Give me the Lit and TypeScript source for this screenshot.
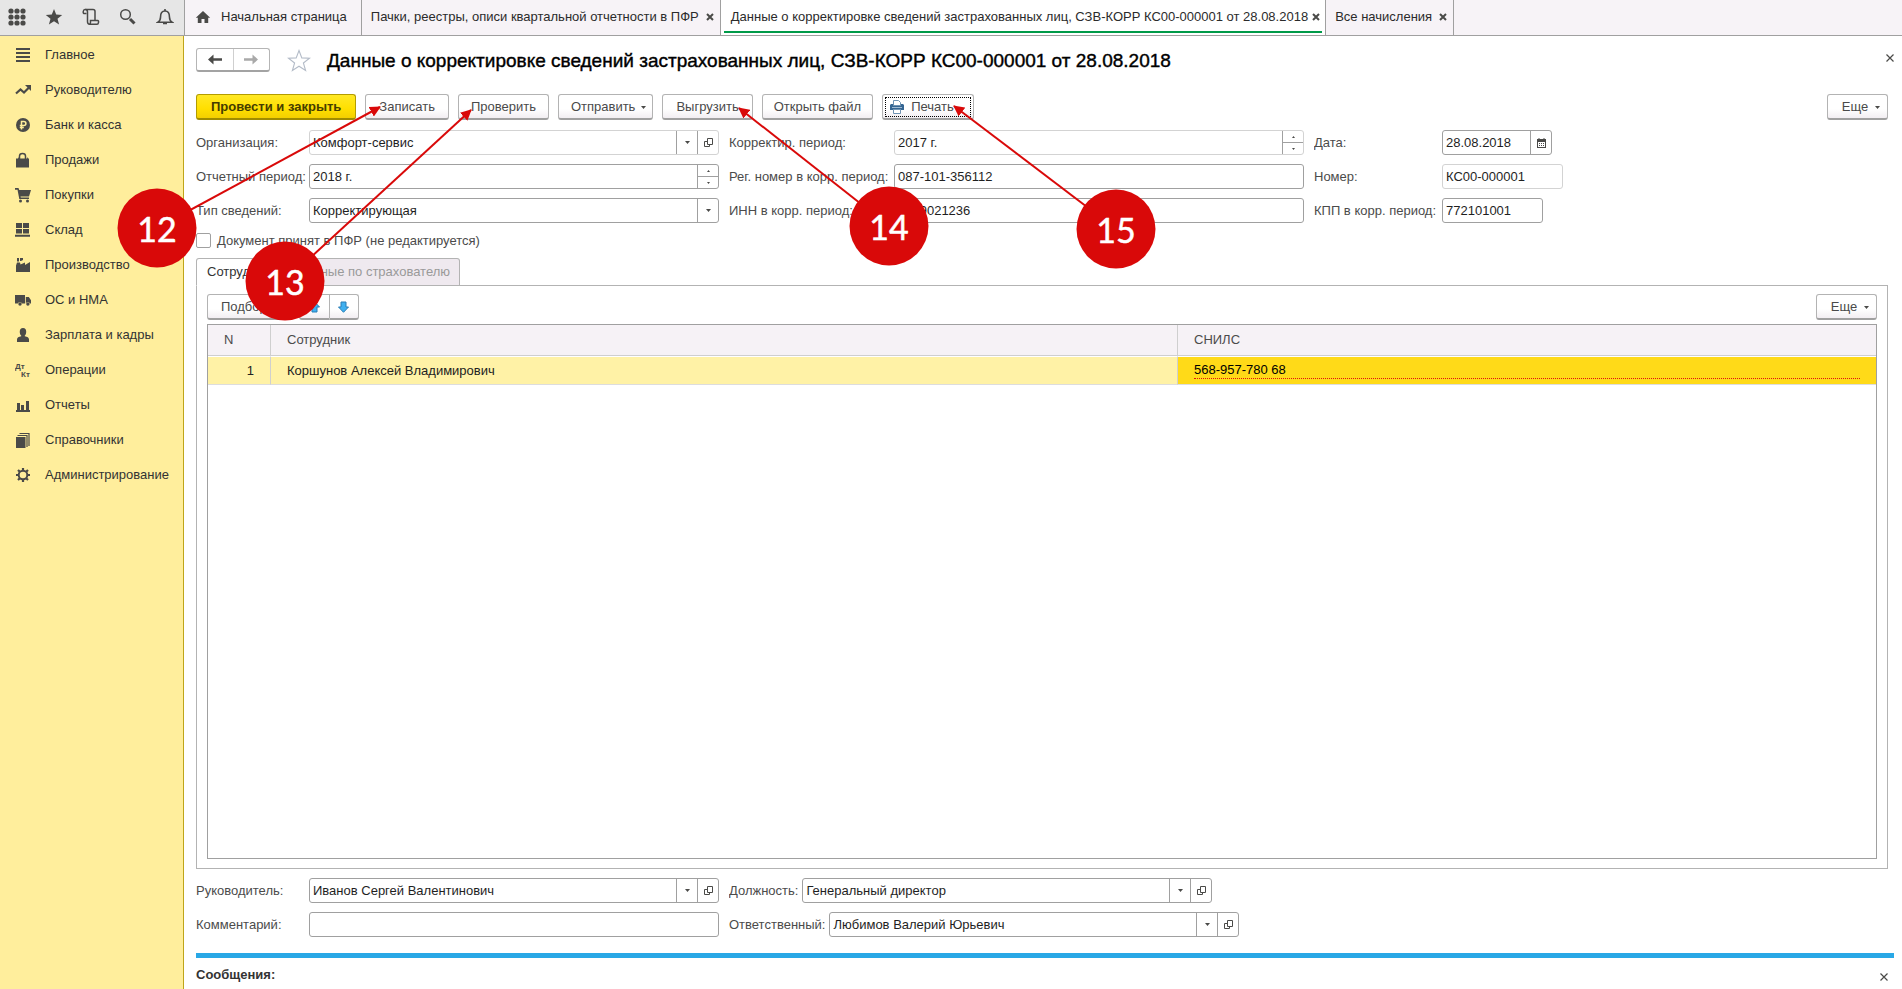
import { LitElement, html, css, svg, TemplateResult } from "lit";
import { customElement, property } from "lit/decorators.js";
import { classMap } from "lit/directives/class-map.js";

const ink = "#4a4a48";

const icons: Record<string, TemplateResult> = {
  apps: svg`<g fill=${ink}>${[3, 9, 15].map((y) => [3, 9, 15].map((x) => svg`<circle cx=${x} cy=${y} r="2.6"/>`))}</g>`,
  star: svg`<path fill=${ink} d="M9 1l2.200 5.600 6 .3-4.700 3.800 1.600 5.900L9 13.300l-5.100 3.300 1.600-5.900L.8 6.900l6-.3z"/>`,
  history: svg`<g fill="none" stroke=${ink} stroke-width="1.500"><path d="M4.500 5.500H1.800c-.9 0-1-4 1.200-4h8c1.500 0 2 .8 2 2v9"/><path d="M3.500 1.500c1.500 0 2 1 2 2.500v9.500c0 1.800.8 2.700 2 2.700h7.500c1.800 0 2-3.700.8-3.700H8.500v1.800c0 1.200-.4 1.900-1.200 1.900"/></g>`,
  search: svg`<circle cx="6.500" cy="6.500" r="4.800" fill="none" stroke=${ink} stroke-width="1.500"/><path d="M11 11l4.500 4.500" stroke=${ink} stroke-width="3"/>`,
  bell: svg`<g fill="none" stroke=${ink} stroke-width="1.600"><path d="M2 14.200c1.800-1.200 2.500-2.500 2.500-5 0-4 1.500-6.200 4.500-6.200s4.500 2.200 4.500 6.200c0 2.500.7 3.800 2.500 5z"/><path d="M9 1v2M7 15.500h4"/></g>`,
  home: svg`<path fill=${ink} d="M8 2l7.200 6.800h-2V14H9.500v-4h-3v4H2.800V8.800h-2z"/>`,
  main: svg`<path fill=${ink} d="M1 1h14v2H1zM1 5h14v2H1zM1 9h14v2H1zM1 13h14v2H1z"/>`,
  chief: svg`<path fill="none" stroke=${ink} stroke-width="2.200" d="M1 11.500l4.500-4 3.500 3 5-5"/><path fill=${ink} d="M10 3h6v6z"/>`,
  bank: svg`<circle cx="8" cy="8" r="7" fill=${ink}/><path fill="none" stroke="#ffee9c" stroke-width="1.500" d="M6.500 12.500V4.500h2.300c2.800 0 2.800 4 0 4H4.800M4.800 10.500h4"/>`,
  sales: svg`<path fill=${ink} d="M1 6.500h2V5l1 1.500h8L13 5v1.500h1v9H1z"/><path fill="none" stroke=${ink} stroke-width="1.500" d="M4.500 8V4c0-3.500 6-3.500 6 0v4"/>`,
  cart: svg`<path fill=${ink} d="M0 1h3.500l.7 2H16l-2 6.500H5.500l.3 1H14V12H4.300L2.500 2.800H0z"/><circle cx="5.500" cy="14" r="1.500" fill=${ink}/><circle cx="12.500" cy="14" r="1.500" fill=${ink}/>`,
  store: svg`<path fill=${ink} d="M1 1h6v5H1zM8 1h6v5H8zM1 7h6v4.500H1zM8 7h6v4.500H8zM0 12.800h15v2H0z"/>`,
  factory: svg`<path fill=${ink} d="M1 15V8.500L2 5.500h3l.5 2L10 5.500V8l5-3v10zM2 1h2v3.500H2zM5 1h3v2L6 4H5z"/>`,
  truck: svg`<path fill=${ink} d="M0 3h10v8.500H7a2.200 2.200 0 00-4.200 0H0zM10.800 5h3L16 8.200v3.300h-1a2.200 2.200 0 00-4.200 0z"/><circle cx="5" cy="12" r="1.700" fill=${ink}/><circle cx="12.900" cy="12" r="1.700" fill=${ink}/>`,
  person: svg`<path fill=${ink} d="M8 1c4.500 0 3.500 6.500 1.800 7.500v.8c2.500.7 4.200 1.200 4.200 3.200V15H2v-2.500c0-2 1.700-2.500 4.200-3.200v-.8C4.500 7.500 3.500 1 8 1z"/>`,
  dtkt: svg`<g fill=${ink} font-family="Liberation Sans" font-weight="700" font-size="8"><text x="0" y="7">Дт</text><text x="6" y="15">Кт</text></g>`,
  chart: svg`<path fill=${ink} d="M1 13h14v2H1zM2 6h3v8H2zM6 8h3v6H6zM11 4h3v10h-3z"/>`,
  books: svg`<path fill=${ink} d="M1 5h9.500v11H1z"/><path fill="none" stroke=${ink} stroke-width="1.200" d="M2.500 3.500h9.500V15M4.500 1.500h9.500V14"/>`,
  gear: svg`<circle cx="8" cy="8" r="4.300" fill="none" stroke=${ink} stroke-width="2"/><path stroke=${ink} stroke-width="2.200" d="M8 1v2.500M8 12.500V15M1 8h2.500M12.500 8H15M3 3l1.800 1.800M11.200 11.200L13 13M3 13l1.800-1.800M11.200 4.800L13 3"/>`,
  closeBold: svg`<path stroke=${ink} stroke-width="2" d="M1 1l6 6M7 1L1 7"/>`,
  close: svg`<path stroke=${ink} stroke-width="1.200" d="M.5.500l7 7M7.500.500l-7 7"/>`,
  back: svg`<path fill=${ink} d="M0 5.500L5.500 0.500v3.800H14v2.400H5.500v3.800z"/>`,
  forward: svg`<path fill="#a9a9a9" d="M14 5.500L8.500 0.500v3.800H0v2.400h8.500v3.800z"/>`,
  favorite: svg`<path fill="#fff" stroke="#b4bcc8" stroke-width="1.100" d="M12 1.500l2.800 7.400 7.700.3-6.100 4.800 2.200 7.500L12 17.200l-6.600 4.300 2.200-7.500L1.500 9.200l7.700-.3z"/>`,
  down: svg`<path fill=${ink} d="M0 0h5L2.500 3z"/>`,
  tinyUp: svg`<path fill=${ink} d="M0 2h3L1.500 0z"/>`,
  tinyDown: svg`<path fill=${ink} d="M0 0h3L1.500 2z"/>`,
  open: svg`<path fill="none" stroke=${ink} stroke-width="1" d="M3.500.500h5v6h-5zM3.500 3.500h-3v5h5v-2"/>`,
  calendar: svg`<path fill=${ink} d="M0 1h1.500V0h1v1h4V0h1v1H9v9H0z"/><path fill="#fff" d="M1 4h7v5H1z"/><path stroke=${ink} stroke-width="1" stroke-dasharray="1 1" d="M2 5.500h5M2 7.500h5"/>`,
  printer: svg`<path fill="#346592" d="M1 4h12l1 1v5H0V5z"/><path fill="#fff" stroke="#6f93b3" d="M3.500 5.500V.500h5l2 2v3z"/><path fill="#9db9d2" d="M2 7h10v1H2z"/><path fill="#fff" stroke="#6f93b3" d="M3.500 9.500h7v4h-7z"/>`,
  arrowUp: svg`<path fill="#3fb0f0" stroke="#2a7db5" d="M5.500.700l5 5.300H8v5H3V6H.500z"/>`,
  arrowDown: svg`<path fill="#3fb0f0" stroke="#2a7db5" d="M5.500 11.300l5-5.300H8V1H3v5H.500z"/>`,
};

const icon = (name: string, w = 16, h = w) =>
  html`<svg class="icon" width=${w} height=${h} viewBox="0 0 ${w} ${h}" aria-hidden="true">${icons[name]}</svg>`;

const base = css`
  * { box-sizing: border-box; }
  button, input, select, a { font: inherit; color: inherit; }
  button { padding: 0; margin: 0; border: 0; background: none; cursor: pointer; }
  a { text-decoration: none; }
  .icon { display: block; flex: none; }
`;

type Extra = "drop" | "open" | "spin" | "date";

@customElement("form-field")
class FormField extends LitElement {
  @property() label = "";
  @property() value = "";
  @property() extras = "";
  @property({ type: Boolean }) select = false;
  @property({ type: Boolean }) readonly = false;

  static styles = [base, css`
    :host { display: contents; }
    .label { color: #4b4b4b; line-height: 25px; white-space: nowrap; overflow: hidden; }
    .box {
      display: flex; height: 25px; min-width: 0; overflow: hidden;
      border: 1px solid #a0a0a0; border-radius: 3px; background: #fff;
    }
    .box.readonly { border-color: #d3d3d3; }
    .control {
      flex: 1; min-width: 0; width: 0; height: 23px; padding: 0 3px; margin: 0;
      border: 0; outline: 0; background: none; color: #1f1f1f; appearance: none;
    }
    .side {
      width: 21px; flex: none; border-left: 1px solid #a0a0a0;
      display: flex; align-items: center; justify-content: center;
    }
    .spin { flex-direction: column; align-items: stretch; }
    .step { flex: 1; display: flex; align-items: center; justify-content: center; }
    .step + .step { border-top: 1px solid #a0a0a0; }
    .pick { pointer-events: none; }
  `];

  private side(kind: Extra) {
    if (kind === "spin")
      return html`<span class="side spin">
        <button class="step" aria-label="Увеличить">${icon("tinyUp", 3, 2)}</button>
        <button class="step" aria-label="Уменьшить">${icon("tinyDown", 3, 2)}</button>
      </span>`;
    if (kind === "open") return html`<button class="side" aria-label="Открыть">${icon("open", 9)}</button>`;
    if (kind === "date") return html`<button class="side" aria-label="Календарь">${icon("calendar", 9, 10)}</button>`;
    return html`<button class="side" aria-label="Выбрать">${icon("down", 5, 3)}</button>`;
  }

  render() {
    const list = this.extras.split(" ").filter(Boolean) as Extra[];
    return html`
      <label class="label" for="c">${this.label}</label>
      <div class=${classMap({ box: true, readonly: this.readonly })} part="box">
        ${this.select
          ? html`<select class="control" id="c"><option>${this.value}</option></select>
              <span class="side pick">${icon("down", 5, 3)}</span>`
          : html`<input class="control" id="c" .value=${this.value} ?readonly=${this.readonly} />`}
        ${list.map((k) => this.side(k))}
      </div>`;
  }
}

@customElement("callout-layer")
class CalloutLayer extends LitElement {
  static styles = css`
    :host { position: absolute; left: 0; top: 0; z-index: 5; width: 0; height: 0; pointer-events: none; }
    .layer { display: block; overflow: visible; }
    .num { font: 34px Lato, "Open Sans", sans-serif; fill: #fff; stroke: #fff; stroke-width: 0.5px; text-anchor: middle; }
  `;
  private marks = [
    { n: 12, x: 157, y: 228, tx: 380, ty: 107 },
    { n: 13, x: 285, y: 281, tx: 471, ty: 110 },
    { n: 14, x: 889, y: 226, tx: 739, ty: 108 },
    { n: 15, x: 1116, y: 229, tx: 954, ty: 106 },
  ];
  render() {
    return html`<svg class="layer" width="1" height="1">
      <defs>
        <marker id="head" markerWidth="11" markerHeight="11" refX="10" refY="5.500" orient="auto" markerUnits="userSpaceOnUse">
          <path d="M0 0l11 5.500-11 5.500z" fill="#d90909" />
        </marker>
      </defs>
      ${this.marks.map((m) => svg`
        <line x1=${m.x} y1=${m.y} x2=${m.tx} y2=${m.ty} stroke="#d90909" stroke-width="2" marker-end="url(#head)"/>
        <circle cx=${m.x} cy=${m.y} r="39.500" fill="#d90909"/>
        <text class="num" x=${m.x} y=${m.y + 14}>${m.n}</text>`)}
    </svg>`;
  }
}

@customElement("app-root")
class AppRoot extends LitElement {
  static styles = [base, css`
    :host {
      position: relative; display: flex; flex-direction: column; min-height: 100vh;
      background: #fff; color: #333; font: 13px/16px "Liberation Sans", Arial, sans-serif;
    }
    .top { display: flex; height: 36px; background: #f7f3f7; border-bottom: 1px solid #a0a0a0; }
    .tools {
      width: 185px; flex: none; display: flex; align-items: center; justify-content: space-between;
      padding: 0 10px 2px 8px; background: #e6e6e6; border-right: 1px solid #a0a0a0;
    }
    .tab {
      display: flex; align-items: center; padding: 0 6px 1px 9px;
      border-right: 1px solid #a0a0a0; white-space: nowrap; color: #2b2b2b;
    }
    .tab.home { gap: 10px; padding: 0 14px 1px 10px; }
    .tab.active { background: #fff; padding: 0 3px; align-items: flex-start; }
    .tab.active .tabin { height: 33px; padding: 2px 2px 0 7px; gap: 4px; border-bottom: 2px solid #009a49; }
    .tabin { display: flex; align-items: center; gap: 7px; }
    .body { flex: 1; display: flex; min-height: 0; }
    .nav {
      width: 184px; flex: none; padding-top: 1px; background: #ffee9c; border-right: 1px solid #bfa51a;
    }
    .navitem { display: flex; align-items: center; gap: 14px; height: 35px; padding-left: 15px; color: #333; }
    .main { flex: 1; min-width: 0; display: flex; flex-direction: column; padding: 12px 8px 0 12px; }
    .head { display: flex; align-items: center; height: 26px; }
    .history {
      display: flex; width: 74px; height: 24px; margin: 0 17px 2px 0;
      border: 1px solid #b5b5b5; border-bottom: 2px solid #a3a3a3; border-radius: 3px;
    }
    .step { flex: 1; display: flex; align-items: center; justify-content: center; }
    .step + .step { border-left: 1px solid #cfcfcf; }
    .title {
      flex: 1; margin: 0 0 0 16px; font-size: 19px; line-height: 26px; font-weight: 400;
      color: #000; -webkit-text-stroke: 0.4px #000; white-space: nowrap;
    }
    .close { display: block; }
    .head .close { margin-bottom: 6px; }
    .bar { display: flex; gap: 9px; padding-right: 6px; }
    .commands { margin-top: 20px; }
    .push {
      display: flex; align-items: center; justify-content: center; height: 26px; padding: 1px 13px 0;
      white-space: nowrap; color: #4a4a4a; background: linear-gradient(#fff 60%, #f2eef2);
      border: 1px solid #b3b3b3; border-bottom: 2px solid #a0a0a0; border-radius: 3px;
    }
    .push.drop { gap: 6px; padding: 1px 6px 0 12px; }
    .push.snug { padding: 1px 12px 0; }
    .push.compact { padding: 1px 11px 0; }
    .push.end { margin-left: auto; gap: 7px; min-width: 61px; padding-left: 13px; }
    .push.primary {
      padding: 1px 14px 0;
      font-weight: 700; color: #453c00; background: linear-gradient(#ffe825, #ffdf00 60%, #f3cf00);
      border-color: #b39c00; border-bottom-color: #a08c00;
    }
    .push.print { padding: 0 2px; }
    .focus { display: flex; align-items: center; gap: 7px; width: 86px; height: 20px; padding-left: 4px; border: 1px dotted #000; }
    .form {
      display: grid; gap: 9px 0; margin-top: 10px;
      grid-template-columns: 113px minmax(0, 410px) 10px 165px minmax(0, 410px) 10px 128px 121px;
    }
    .date::part(box) { width: 110px; }
    .kpp::part(box) { width: 101px; }
    .accepted { display: flex; align-items: center; gap: 6px; height: 15px; margin-top: 10px; color: #4b4b4b; }
    .check { appearance: none; width: 15px; height: 15px; margin: 0; border: 1px solid #a0a0a0; border-radius: 2px; background: #fff; }
    .pages { display: flex; margin-top: 10px; height: 28px; position: relative; z-index: 1; margin-bottom: -1px; }
    .page { padding: 0 10px; border: 1px solid #b3b3b3; border-radius: 3px 3px 0 0; }
    .page + .page { padding: 0 9px; border-left: 0; background: #efe9ef; color: #9a9a9a; border-top-left-radius: 0; }
    .page.on { background: #fff; border-bottom-color: #fff; color: #333; }
    .panel { flex: 1; display: flex; flex-direction: column; margin-right: 6px; padding: 8px 10px 9px; border: 1px solid #b3b3b3; }
    .panel .bar { padding: 0; }
    .group { display: flex; margin-left: 9px; }
    .group .push { width: 30px; padding: 0; }
    .group .push:first-child { border-radius: 3px 0 0 3px; border-right: 0; }
    .group .push:last-child { border-radius: 0 3px 3px 0; }
    .gridbox { flex: 1; margin-top: 4px; border: 1px solid #a0a0a0; }
    .grid { width: 100%; border-collapse: separate; border-spacing: 0; table-layout: fixed; }
    .cn { width: 63px; }
    .cs { width: 698px; }
    .grid th {
      height: 31px; padding: 0 16px; text-align: left; font-weight: 400; color: #4b4b4b; background: #f6f2f6;
      border-bottom: 1px solid #cfcfcf; border-right: 1px solid #cfcfcf;
    }
    .grid td {
      height: 29px; padding: 0 16px; color: #222; background: #fff2a6; background-clip: padding-box;
      border-top: 1px solid #fff; border-bottom: 1px solid #ddd; border-right: 1px solid #cfcfcf;
    }
    .grid th:last-child, .grid td:last-child { border-right: 0; }
    .grid td.num { text-align: right; }
    .grid td.cur { background: #ffda18; color: #000; }
    .snils { display: block; border-bottom: 1px dotted #e01010; line-height: 16px; }
    .foot {
      display: grid; gap: 9px 10px; margin-top: 9px;
      grid-template-columns: minmax(0, 523px) minmax(0, 1fr);
    }
    .pair { display: grid; grid-template-columns: 113px minmax(0, 1fr); }
    .auto { grid-template-columns: max-content minmax(0, 410px); column-gap: 4px; }
    .messages { display: flex; justify-content: space-between; margin-top: 16px; border-top: 5px solid #29a8e6; height: 36px; padding: 9px 6px 0 0; }
    .caption { margin: 0; font-size: 13px; line-height: 16px; font-weight: 700; color: #333; }
    .messages .close { align-self: flex-start; margin-top: 6px; }
  `];

  private nav: [string, string][] = [
    ["main", "Главное"], ["chief", "Руководителю"], ["bank", "Банк и касса"], ["sales", "Продажи"],
    ["cart", "Покупки"], ["store", "Склад"], ["factory", "Производство"], ["truck", "ОС и НМА"],
    ["person", "Зарплата и кадры"], ["dtkt", "Операции"], ["chart", "Отчеты"],
    ["books", "Справочники"], ["gear", "Администрирование"],
  ];

  private tab(text: string, active = false) {
    return html`<div class=${classMap({ tab: true, active })}>
      <span class="tabin"><a href="#">${text}</a><button aria-label="Закрыть вкладку">${icon("closeBold", 8)}</button></span>
    </div>`;
  }

  private more() {
    return html`<button class="push drop end">Еще ${icon("down", 5, 3)}</button>`;
  }

  render() {
    const name = "Данные о корректировке сведений застрахованных лиц, СЗВ-КОРР КС00-000001 от 28.08.2018";
    return html`
      <header class="top">
        <div class="tools">
          <button aria-label="Меню">${icon("apps", 18)}</button>
          <button aria-label="Избранное">${icon("star", 18)}</button>
          <button aria-label="История">${icon("history", 18)}</button>
          <button aria-label="Поиск">${icon("search", 18)}</button>
          <button aria-label="Оповещения">${icon("bell", 18)}</button>
        </div>
        <a class="tab home" href="#">${icon("home", 16)}Начальная страница</a>
        ${this.tab("Пачки, реестры, описи квартальной отчетности в ПФР")}
        ${this.tab(name, true)}
        ${this.tab("Все начисления")}
      </header>
      <div class="body">
        <nav class="nav">${this.nav.map(([i, t]) => html`<a class="navitem" href="#">${icon(i)}${t}</a>`)}</nav>
        <main class="main">
          <div class="head">
            <div class="history">
              <button class="step" aria-label="Назад">${icon("back", 14, 11)}</button>
              <button class="step" aria-label="Вперед">${icon("forward", 14, 11)}</button>
            </div>
            <button aria-label="В избранное">${icon("favorite", 24)}</button>
            <h1 class="title">${name}</h1>
            <button class="close" aria-label="Закрыть">${icon("close", 8)}</button>
          </div>
          <div class="bar commands">
            <button class="push primary">Провести и закрыть</button>
            <button class="push">Записать</button>
            <button class="push snug">Проверить</button>
            <button class="push drop">Отправить ${icon("down", 5, 3)}</button>
            <button class="push">Выгрузить</button>
            <button class="push compact">Открыть файл</button>
            <button class="push print"><span class="focus">${icon("printer", 14)}Печать</span></button>
            ${this.more()}
          </div>
          <div class="form">
            <form-field label="Организация:" value="Комфорт-сервис" extras="drop open" readonly></form-field><i></i>
            <form-field label="Корректир. период:" value="2017 г." extras="spin" readonly></form-field><i></i>
            <form-field class="date" label="Дата:" value="28.08.2018" extras="date"></form-field>
            <form-field label="Отчетный период:" value="2018 г." extras="spin"></form-field><i></i>
            <form-field label="Рег. номер в корр. период:" value="087-101-356112"></form-field><i></i>
            <form-field label="Номер:" value="КС00-000001" readonly></form-field>
            <form-field label="Тип сведений:" value="Корректирующая" select></form-field><i></i>
            <form-field label="ИНН в корр. период:" value="7729021236"></form-field><i></i>
            <form-field class="kpp" label="КПП в корр. период:" value="772101001"></form-field>
          </div>
          <label class="accepted"><input class="check" type="checkbox" />Документ принят в ПФР (не редактируется)</label>
          <div class="pages" role="tablist">
            <button class="page on" role="tab" aria-selected="true">Сотрудники</button>
            <button class="page" role="tab" aria-selected="false">Данные по страхователю</button>
          </div>
          <section class="panel">
            <div class="bar">
              <button class="push">Подбор</button>
              <div class="group">
                <button class="push" aria-label="Вверх">${icon("arrowUp", 11, 12)}</button>
                <button class="push" aria-label="Вниз">${icon("arrowDown", 11, 12)}</button>
              </div>
              ${this.more()}
            </div>
            <div class="gridbox">
              <table class="grid">
                <colgroup><col class="cn" /><col /><col class="cs" /></colgroup>
                <thead><tr><th>N</th><th>Сотрудник</th><th>СНИЛС</th></tr></thead>
                <tbody><tr>
                  <td class="num">1</td>
                  <td>Коршунов Алексей Владимирович</td>
                  <td class="cur"><span class="snils">568-957-780 68</span></td>
                </tr></tbody>
              </table>
            </div>
          </section>
          <div class="foot">
            <div class="pair"><form-field label="Руководитель:" value="Иванов Сергей Валентинович" extras="drop open"></form-field></div>
            <div class="pair auto"><form-field label="Должность:" value="Генеральный директор" extras="drop open"></form-field></div>
            <div class="pair"><form-field label="Комментарий:"></form-field></div>
            <div class="pair auto"><form-field label="Ответственный:" value="Любимов Валерий Юрьевич" extras="drop open"></form-field></div>
          </div>
          <section class="messages">
            <h2 class="caption">Сообщения:</h2>
            <button class="close" aria-label="Закрыть сообщения">${icon("close", 8)}</button>
          </section>
        </main>
      </div>
      <callout-layer></callout-layer>`;
  }
}
